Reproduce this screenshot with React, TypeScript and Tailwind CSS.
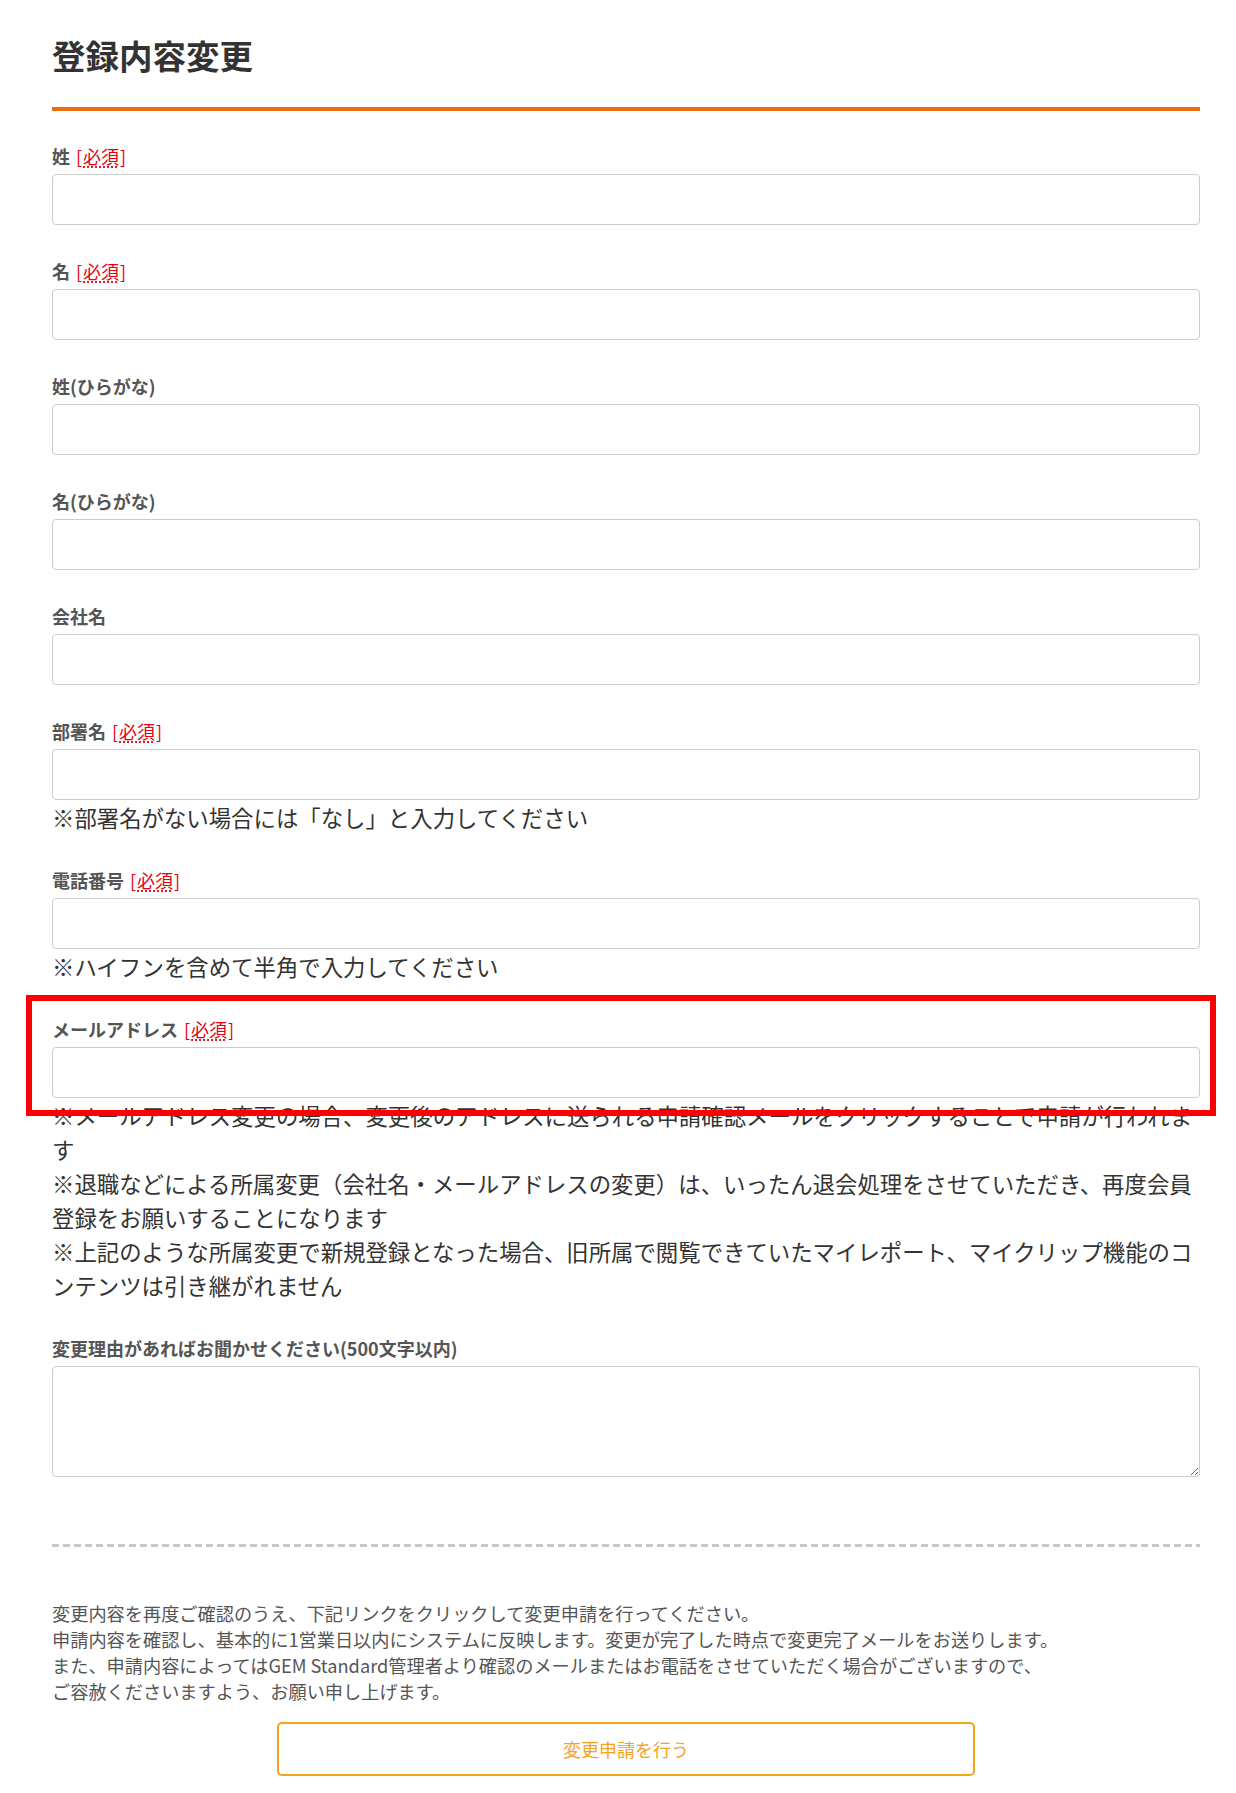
import type { ReactNode } from "react";

type FieldProps = {
  label: string;
  required?: boolean;
  note?: ReactNode;
  highlight?: boolean;
};

function Required() {
  return (
    <span className="ml-[6px] font-normal text-[#e60012]">
      [<abbr title="必須" className="mx-[1px] underline decoration-dotted decoration-[#e60012] underline-offset-[3px]">必須</abbr>]
    </span>
  );
}

function Field({ label, required, note, highlight }: FieldProps) {
  return (
    <div>
      <div className="relative">
        <label className="block text-[18px] leading-[26px] font-bold text-[#555]">
          {label}
          {required && <Required />}
        </label>
        <input
          type="text"
          className="mt-[5px] block h-[51px] w-full rounded-[4px] border border-[#ccc] bg-white px-3 outline-none"
        />
        {highlight && (
          <div className="pointer-events-none absolute top-[-21px] left-[-26px] right-[-16px] bottom-[-18px] border-[6px] border-[#ff0000]" />
        )}
      </div>
      {note && <div className="text-[22.4px] leading-[34px] text-[#333]">{note}</div>}
    </div>
  );
}

export default function App() {
  return (
    <div className="min-h-[1793px] bg-white font-['Noto_Sans_CJK_JP','Liberation_Sans',sans-serif]">
      <div className="pl-[52px] pr-[36px] pt-[30px] pb-[16px]">
        <h1 className="text-[33.5px] leading-[50px] font-bold text-[#333]">登録内容変更</h1>
        <div className="mt-[27px] h-[4px] bg-[#ea6c0c]" />

        <div className="mt-[32px] flex flex-col gap-[33px]">
          <Field label="姓" required />
          <Field label="名" required />
          <Field label="姓(ひらがな)" />
          <Field label="名(ひらがな)" />
          <Field label="会社名" />
          <Field label="部署名" required note={<p>※部署名がない場合には「なし」と入力してください</p>} />
          <Field label="電話番号" required note={<p>※ハイフンを含めて半角で入力してください</p>} />
          <Field
            label="メールアドレス"
            required
            highlight
            note={
              <>
                <p>※メールアドレス変更の場合、変更後のアドレスに送られる申請確認メールをクリックすることで申請が行われます</p>
                <p>※退職などによる所属変更（会社名・メールアドレスの変更）は、いったん退会処理をさせていただき、再度会員登録をお願いすることになります</p>
                <p>※上記のような所属変更で新規登録となった場合、旧所属で閲覧できていたマイレポート、マイクリップ機能のコンテンツは引き継がれません</p>
              </>
            }
          />
          <div>
            <label className="block text-[18px] leading-[26px] font-bold text-[#555]">
              変更理由があればお聞かせください(500文字以内)
            </label>
            <textarea className="mt-[5px] block h-[111px] w-full resize-y rounded-[4px] border border-[#ccc] bg-white px-3 py-2 outline-none" />
          </div>
        </div>

        <div className="mt-[67px] h-[3px] bg-[repeating-linear-gradient(90deg,#c8c8c8_0_7px,transparent_7px_11px)]" />

        <p className="mt-[53px] text-[18.2px] leading-[26px] text-[#555]">
          変更内容を再度ご確認のうえ、下記リンクをクリックして変更申請を行ってください。
          <br />
          申請内容を確認し、基本的に1営業日以内にシステムに反映します。変更が完了した時点で変更完了メールをお送りします。
          <br />
          また、申請内容によってはGEM Standard管理者より確認のメールまたはお電話をさせていただく場合がございますので、
          <br />
          ご容赦くださいますよう、お願い申し上げます。
        </p>

        <div className="mt-[18px] flex justify-center">
          <button
            type="button"
            className="h-[54px] w-[698px] rounded-[5px] border-2 border-[#f5a21e] bg-white text-[18px] text-[#f5a21e]"
          >
            変更申請を行う
          </button>
        </div>
      </div>
    </div>
  );
}
